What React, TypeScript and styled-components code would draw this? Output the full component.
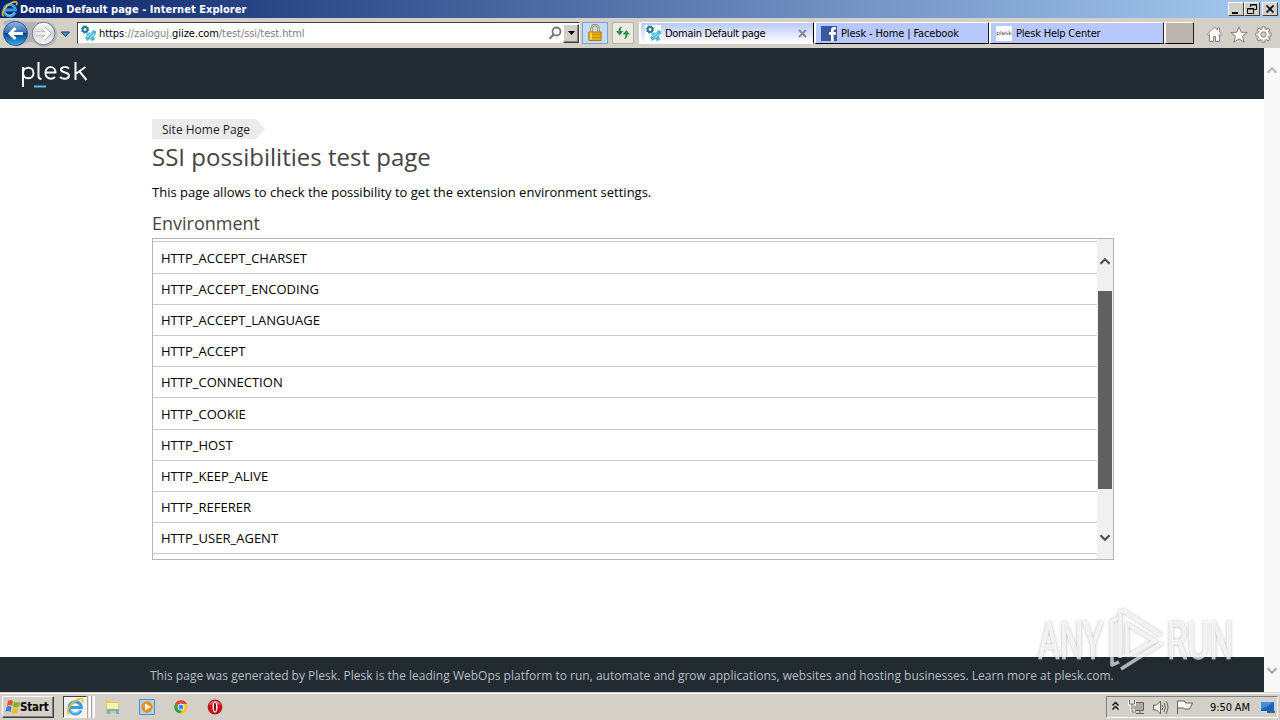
import type { ReactNode } from 'react'
import styled, { createGlobalStyle, css } from 'styled-components'

const GlobalStyle = createGlobalStyle`
  * {
    box-sizing: border-box;
  }

  body {
    margin: 0;
    overflow: hidden;
    background: #fff;
    font-family: 'Open Sans', sans-serif;
  }

  svg {
    display: block;
    flex-shrink: 0;
  }
`

const Screen = styled.div`
  position: relative;
  display: flex;
  flex-direction: column;
  width: 1280px;
  height: 720px;
  overflow: hidden;
`

/* Title bar */

const TitleBar = styled.div`
  display: flex;
  align-items: center;
  height: 18px;
  padding: 0 2px 0 1px;
  background: linear-gradient(90deg, #0a246a 0%, #a6caf0 100%);
`

const WindowTitle = styled.div`
  flex: 1;
  margin-left: 2px;
  padding-top: 2px;
  font: bold 11px/16px 'DejaVu Sans Condensed', 'DejaVu Sans', sans-serif;
  letter-spacing: 0.04px;
  white-space: nowrap;
  color: #fff;
`

const WindowButton = styled.div<{ $gap?: boolean }>`
  width: 16px;
  height: 14px;
  margin-left: ${({ $gap }) => ($gap ? '2px' : '0')};
  background: #d4d0c8;
  border: 1px solid;
  border-color: #fff #404040 #404040 #fff;
`

/* Toolbar */

const Toolbar = styled.div`
  display: flex;
  height: 30px;
  padding-top: 4px;
  background: #d4d0c8;
`

const NavButtons = styled.div`
  width: 77px;
  margin-top: -3px;
`

const AddressBar = styled.div`
  display: flex;
  align-items: center;
  width: 503px;
  height: 22px;
  padding: 0 0 0 2px;
  background: #fff;
  border: 1px solid;
  border-color: #404040 #fff #d4d0c8 #404040;
`

const Url = styled.div`
  flex: 1;
  margin-left: 3px;
  padding-top: 2px;
  font: 11px/18px 'DejaVu Sans Condensed', 'DejaVu Sans', sans-serif;
  letter-spacing: -0.06px;
  white-space: nowrap;
  color: #808080;

  b {
    font-weight: 400;
    color: #000;
  }
`

const DropButton = styled.div`
  display: flex;
  align-items: center;
  justify-content: center;
  width: 16px;
  height: 19px;
  background: #d4d0c8;
  border: 1px solid;
  border-color: #fff #404040 #404040 #fff;
  box-shadow: inset -1px -1px #808080;
`

const ToolButton = styled.div<{ $active?: boolean }>`
  display: flex;
  align-items: center;
  justify-content: center;
  width: ${({ $active }) => ($active ? '26px' : '22px')};
  height: 22px;
  margin-left: ${({ $active }) => ($active ? '2px' : '4px')};
  background: #ece9e5;
  border: 1px solid #b5b2ac;
  border-radius: 2px;

  ${({ $active }) =>
    $active &&
    css`
      background: #c4dcf8;
      border-color: #7da2ce;
      border-radius: 0;
    `}
`

const Tabs = styled.div`
  display: flex;
  margin-left: 5px;
`

const TabItem = styled.div<{ $active?: boolean }>`
  display: flex;
  align-items: center;
  width: 175px;
  height: 22px;
  padding: 0 5px;
  background: #b8c8fc;
  border: 1px solid;
  border-color: #fff #202020 #000 #fff;
  border-left-width: 2px;

  ${({ $active }) =>
    $active &&
    css`
      padding: 0 6px 0 4px;
      background: linear-gradient(#b9c9f6, #fff);
      border-color: #fff #000 #fff #fff;
    `}
`

const TabLabel = styled.span<{ $spacing: number }>`
  flex: 1;
  margin-left: 4px;
  padding-top: 2px;
  font: 11px/18px 'DejaVu Sans Condensed', 'DejaVu Sans', sans-serif;
  letter-spacing: ${({ $spacing }) => $spacing}px;
  white-space: nowrap;
  color: #000;
`

const NewTab = styled.div`
  width: 30px;
  height: 22px;
  background: #bdb5ad;
  border: 1px solid;
  border-color: #fff #202020 #000 #fff;
  border-left-width: 2px;
`

const PleskBadge = styled.div`
  width: 16px;
  height: 15px;
  background: #fff;
  font: 6px/13px 'DejaVu Sans', sans-serif;
  letter-spacing: -0.1px;
  text-align: center;
  color: #444;
`

const Commands = styled.div`
  display: flex;
  gap: 7px;
  margin: 4px 0 0 12px;
`

/* Web page */

const Viewport = styled.div`
  display: flex;
  height: 644px;
`

const Page = styled.div`
  display: flex;
  flex-direction: column;
  width: 1264px;
  background: #fff;
`

const Header = styled.header`
  height: 51px;
  padding: 9px 0 0 20px;
  background: #222b32;
`

const Content = styled.main`
  flex: 1;
  width: 962px;
  margin-left: 152px;
  padding-top: 20px;
`

const Crumb = styled.div`
  width: 113px;
  height: 20px;
  padding-left: 10px;
  background: #ebebeb;
  clip-path: polygon(0 0, 104px 0, 100% 50%, 104px 100%, 0 100%);
  font-size: 12px;
  line-height: 21px;
  white-space: nowrap;
  color: #222;
`

const Title = styled.h1`
  margin: 0;
  font-weight: 400;
  font-size: 24px;
  line-height: 36px;
  white-space: nowrap;
  color: #444;
`

const Text = styled.p`
  margin: 5px 0 0;
  font-size: 13px;
  line-height: 24px;
  white-space: nowrap;
  color: #000;
`

const Subtitle = styled.h2`
  margin: 7px 0 0;
  font-weight: 400;
  font-size: 18px;
  line-height: 25px;
  color: #444;
`

const ListBox = styled.div`
  display: flex;
  height: 322px;
  margin-top: 2px;
  border: 1px solid #b5b5b5;
  overflow: hidden;
`

const Rows = styled.div`
  flex: 1;
  padding-top: 2.45px;
`

const Row = styled.div`
  height: 31.15px;
  padding: 0.17px 0 0 8px;
  border-top: 1px solid #ccc;
  font-size: 13px;
  letter-spacing: 0.02px;
  line-height: 31px;
  color: #000;

  &:first-child {
    height: 31.4px;
  }
`

const ListScroll = styled.div`
  display: flex;
  flex-direction: column;
  align-items: center;
  width: 16px;
  padding-top: 17px;
  background: #f0f0f0;
`

const Thumb = styled.div`
  width: 14px;
  height: 198px;
  margin: 25px 0 44px;
  background: #606060;
`

const PageScroll = styled.div`
  display: flex;
  flex-direction: column;
  justify-content: space-between;
  align-items: center;
  width: 16px;
  padding: 17px 0 16px;
  background: #f8f8f8;
`

const Footer = styled.footer`
  height: 35px;
  padding-left: 150px;
  background: #222b32;
  font-size: 12px;
  letter-spacing: 0.008px;
  line-height: 38px;
  white-space: nowrap;
  color: #b6bdc2;
`

/* Taskbar */

const Taskbar = styled.div`
  display: flex;
  align-items: flex-start;
  height: 28px;
  padding: 4px 2px 0;
  background: #d4d0c8;
  box-shadow: inset 0 1px #d4d0c8, inset 0 2px #fff;
`

const StartButton = styled.div`
  display: flex;
  align-items: center;
  width: 52px;
  height: 22px;
  padding-left: 1px;
  border: 1px solid;
  border-color: #fff #404040 #404040 #fff;
  box-shadow: inset -1px -1px #808080;
  font: bold 11.5px/22px 'DejaVu Sans Condensed', 'DejaVu Sans', sans-serif;
  letter-spacing: -0.2px;
  color: #000;
`

const ActiveTask = styled.div`
  display: flex;
  align-items: center;
  width: 24px;
  height: 22px;
  margin-left: 9px;
  padding-left: 2px;
  background: #f3f1ed;
  border: 1px solid;
  border-color: #404040 #fff #fff #404040;
`

const TaskEdge = styled.div`
  width: 4px;
  height: 22px;
  background: #e9e6e0;
  border-right: 2px solid #fff;
  border-left: 1px solid #a7a39c;
`

const Launchers = styled.div`
  display: flex;
  flex: 1;
  gap: 18px;
  margin: 3px 0 0 10px;
`

const Tray = styled.div`
  display: flex;
  align-items: center;
  width: 172px;
  height: 22px;
  border: 1px solid;
  border-color: #808080 #fff #fff #808080;
`

const Clock = styled.span`
  flex: 1;
  margin-left: 11px;
  padding-top: 2px;
  font: 11px/18px 'DejaVu Sans Condensed', 'DejaVu Sans', sans-serif;
  letter-spacing: -0.1px;
  white-space: nowrap;
  color: #000;
`

const Watermark = styled.svg`
  position: absolute;
  top: 605px;
  left: 1030px;
  overflow: visible;
`

const IeIcon = ({ size = 16 }: { size?: number }) => (
  <svg width={size} height={size} viewBox="0 0 16 16" fill="none">
    <path
      d="M13.2 10.8A5.4 5.4 0 1 1 13.6 8.5H4"
      stroke="#3a9be2"
      strokeWidth="2.7"
    />
    <path
      d="M12.5 10.5A4.8 4.8 0 0 1 4 11"
      stroke="#7ed6fa"
      strokeWidth="1"
    />
    <path
      d="M2.5 14.5C-1 12 5 3.5 11 1.2c4-1.5 4.5.5 3.4 2.7"
      stroke="#edbd2d"
      strokeWidth="1.5"
    />
  </svg>
)

const GearsIcon = () => (
  <svg width="16" height="16" viewBox="0 0 16 16">
    <path fill="#fff" d="M0 0h16v16H0z" />
    <circle
      cx="5"
      cy="4.5"
      r="2.4"
      fill="none"
      stroke="#237b8d"
      strokeWidth="2"
    />
    <circle
      cx="5"
      cy="4.5"
      r="3.8"
      fill="none"
      stroke="#237b8d"
      strokeDasharray="1.5 1.5"
    />
    <path
      fill="#50b8dc"
      d="M9 7l2 1 2-3 3 1v3l-2 1 1 5-3 1-2-2-3 2-2-4 2-1-1-2 3-1z"
    />
    <path stroke="#c9edf8" d="M7 12l5-4M10 13l4-4" />
  </svg>
)

const Chevron = ({ up, color }: { up?: boolean; color: string }) => (
  <svg width="12" height="10" viewBox="0 0 12 10">
    <path
      d={up ? 'M1.5 7.7L6 3.2l4.5 4.5' : 'M1.5 2.3L6 6.8l4.5-4.5'}
      fill="none"
      stroke={color}
      strokeWidth="2.2"
    />
  </svg>
)

const Navigation = () => (
  <svg width="77" height="29" viewBox="0 0 77 29">
    <defs>
      <linearGradient id="back" x2="0" y2="1">
        <stop stopColor="#93b9e5" />
        <stop offset=".48" stopColor="#2e68b5" />
        <stop offset=".5" stopColor="#07448f" />
        <stop offset="1" stopColor="#3bb1ef" />
      </linearGradient>
      <linearGradient id="forward" x2="0" y2="1">
        <stop stopColor="#fff" />
        <stop offset=".5" stopColor="#d5d7da" />
        <stop offset="1" stopColor="#f8f8f8" />
      </linearGradient>
    </defs>
    <path
      d="M3 3C12-1 19 2 27 3h21c6 1 9 7 9 13 0 7-6 12-13 12-6 0-8-5-14-5-5 0-8 5-15 5"
      fill="#b3b4b8"
    />
    <circle
      cx="15.5"
      cy="14.5"
      r="12"
      fill="url(#back)"
      stroke="#395b8c"
    />
    <circle
      cx="43.5"
      cy="14.5"
      r="11.3"
      fill="url(#forward)"
      stroke="#777b83"
    />
    <path
      d="M23 14.5H10m5.5-5.5L10 14.5l5.5 5.5"
      fill="none"
      stroke="#fff"
      strokeWidth="3"
    />
    <path
      d="M36 14.5h13M43.5 9l5.5 5.5-5.5 5.5"
      fill="none"
      stroke="#aaa"
      strokeWidth="4"
    />
    <path
      d="M36 14.5h13M43.5 9l5.5 5.5-5.5 5.5"
      fill="none"
      stroke="#fff"
      strokeWidth="2.5"
    />
    <path d="M61.5 13h8L65.5 17.5z" fill="#4b9ad0" stroke="#193a60" />
  </svg>
)

const HomeIcon = () => (
  <svg
    width="17"
    height="17"
    viewBox="0 0 17 17"
    fill="#fff"
    stroke="#85817c"
    strokeLinejoin="round"
  >
    <path d="M11.5 4V2h2v4l2.5 2.5-1 1-1.5-1v7h-4v-5h-2v5h-4v-7l-1.5 1-1-1L8.5 1z" />
  </svg>
)

const StarIcon = () => (
  <svg width="18" height="17" viewBox="0 0 18 17">
    <path
      d="M9 .8l2.2 5.5 6 .2-4.7 3.8 1.6 5.8L9 12.8l-5.1 3.3 1.6-5.8L.8 6.5l6-.2z"
      fill="#fff"
      stroke="#85817c"
    />
  </svg>
)

const GearIcon = () => (
  <svg width="17" height="17" viewBox="0 0 17 17">
    {[0, 45, 90, 135].map((angle) => (
      <path
        key={angle}
        d="M7 .8h3v15.4H7z"
        fill="#fff"
        stroke="#85817c"
        transform={`rotate(${angle} 8.5 8.5)`}
      />
    ))}
    <circle cx="8.5" cy="8.5" r="5.2" fill="#fff" />
    <circle cx="8.5" cy="8.5" r="2.7" fill="#d4d0c8" stroke="#85817c" />
  </svg>
)

type TabProps = {
  icon: ReactNode
  label: string
  active?: boolean
  spacing?: number
}

const Tab = ({ icon, label, active, spacing = 0 }: TabProps) => (
  <TabItem $active={active}>
    {icon}
    <TabLabel $spacing={spacing}>{label}</TabLabel>
    {active && (
      <svg width="9" height="9" viewBox="0 0 9 9">
        <path d="M1 1l7 7M8 1L1 8" stroke="#858998" strokeWidth="2" />
      </svg>
    )}
  </TabItem>
)

const variables = [
  'HTTP_ACCEPT_CHARSET',
  'HTTP_ACCEPT_ENCODING',
  'HTTP_ACCEPT_LANGUAGE',
  'HTTP_ACCEPT',
  'HTTP_CONNECTION',
  'HTTP_COOKIE',
  'HTTP_HOST',
  'HTTP_KEEP_ALIVE',
  'HTTP_REFERER',
  'HTTP_USER_AGENT'
]

const App = () => {
  return (
    <Screen>
      <GlobalStyle />
      <TitleBar>
        <IeIcon size={17} />
        <WindowTitle>Domain Default page - Internet Explorer</WindowTitle>
        <WindowButton>
          <svg width="14" height="12">
            <path d="M3 9h6v2H3z" />
          </svg>
        </WindowButton>
        <WindowButton>
          <svg width="14" height="12" fill="none" stroke="#000">
            <path d="M5.5 4V1.5h6v5H9M5 2h7M2.5 5.5h6v5h-6zM2 6h7" />
          </svg>
        </WindowButton>
        <WindowButton $gap>
          <svg width="14" height="12">
            <path
              d="M3.5 2.5l7 7m0-7l-7 7"
              stroke="#000"
              strokeWidth="1.7"
            />
          </svg>
        </WindowButton>
      </TitleBar>

      <Toolbar>
        <NavButtons>
          <Navigation />
        </NavButtons>
        <AddressBar>
          <GearsIcon />
          <Url>
            <b>https</b>://zaloguj.<b>giize.com</b>/test/ssi/test.html
          </Url>
          <svg width="16" height="16" viewBox="0 0 16 16">
            <circle
              cx="9.5"
              cy="6.5"
              r="4"
              fill="none"
              stroke="#777"
              strokeWidth="1.8"
            />
            <path d="M6.7 9.5l-4.2 4.2" stroke="#777" strokeWidth="2.2" />
          </svg>
          <DropButton>
            <svg width="7" height="4">
              <path d="M0 0h7L3.5 4z" />
            </svg>
          </DropButton>
        </AddressBar>
        <ToolButton $active>
          <svg width="14" height="18" viewBox="0 0 14 18">
            <path
              d="M3.5 9V4.5a3.5 3.5 0 0 1 7 0V9"
              fill="none"
              stroke="#9a8350"
              strokeWidth="2.4"
            />
            <path
              d="M3.5 9V4.5a3.5 3.5 0 0 1 7 0V9"
              fill="none"
              stroke="#eee0ae"
              strokeWidth=".8"
            />
            <path
              d="M.8 8h12.4v8.5H.8z"
              fill="#e7ae19"
              stroke="#b37a08"
            />
            <path d="M1.5 10.5h11M1.5 13.5h11" stroke="#c68c0a" />
            <path d="M3 8.5v7" stroke="#ffe477" strokeWidth="1.5" />
          </svg>
        </ToolButton>
        <ToolButton>
          <svg width="16" height="16" viewBox="0 0 16 16" fill="#2f9148">
            <path d="M7 1.5C4.5 2 3.5 3.5 3.5 6H1l3.7 4.5L8.3 6H5.7C5.7 4.5 6 3 7 1.5z" />
            <path d="M9 14c2.5-.5 3.5-2 3.5-4.5H15L11.3 5 7.7 9.5h2.6C10.3 11 10 12.5 9 14z" />
          </svg>
        </ToolButton>
        <Tabs>
          <Tab
            icon={<GearsIcon />}
            label="Domain Default page"
            spacing={-0.28}
            active
          />
          <Tab
            icon={
              <svg width="16" height="15" viewBox="0 0 16 15">
                <path d="M0 0h16v15H0z" fill="#3858a2" />
                <path
                  d="M10 15V9H8V6h2V4q0-3 3-3h2v2.5h-1.5q-.8 0-.8.8V6H15l-.4 3h-1.9v6z"
                  fill="#fff"
                />
              </svg>
            }
            label="Plesk - Home | Facebook"
            spacing={-0.13}
          />
          <Tab
            icon={<PleskBadge>plesk</PleskBadge>}
            label="Plesk Help Center"
            spacing={-0.2}
          />
          <NewTab />
        </Tabs>
        <Commands>
          <HomeIcon />
          <StarIcon />
          <GearIcon />
        </Commands>
      </Toolbar>

      <Viewport>
        <Page>
          <Header>
            <svg
              width="70"
              height="32"
              viewBox="0 0 70 32"
              fill="none"
              stroke="#f5f7f8"
              strokeWidth="2"
            >
              <path d="M3 30V10M3 16c0-7 10.5-7 10.5 0S3 23 3 16M18.5 5v14q0 3 3 3" />
              <path d="M25.5 15.5h10c0-7-10-7.5-10 .2 0 6 6 7.5 9.5 4.3" />
              <path d="M49 11.5c-2-2-8-2-8 1 0 4 8 2 8 6 0 4-6 4-9 1.5M55.5 5v18M65.5 10l-10 7M59.5 14.5L66.5 23" />
              <path d="M14 29.5h12" stroke="#53bce6" />
            </svg>
          </Header>
          <Content>
            <Crumb>Site Home Page</Crumb>
            <Title>SSI possibilities test page</Title>
            <Text>
              This page allows to check the possibility to get the extension
              environment settings.
            </Text>
            <Subtitle>Environment</Subtitle>
            <ListBox>
              <Rows>
                {variables.map((name) => (
                  <Row key={name}>{name}</Row>
                ))}
                <Row />
              </Rows>
              <ListScroll>
                <Chevron up color="#505050" />
                <Thumb />
                <Chevron color="#505050" />
              </ListScroll>
            </ListBox>
          </Content>
          <Footer>
            This page was generated by Plesk. Plesk is the leading WebOps
            platform to run, automate and grow applications, websites and
            hosting businesses. Learn more at plesk.com.
          </Footer>
        </Page>
        <PageScroll>
          <Chevron up color="#bbb" />
          <Chevron color="#aaa" />
        </PageScroll>
      </Viewport>

      <Taskbar>
        <StartButton>
          <svg width="16" height="16" viewBox="0 0 16 16">
            <path d="M4 2q3-2 5 0L8 7q-2-2-5 0z" fill="#ed5425" />
            <path d="M10 2.5q3 2 6 0l-1 5q-3 2-6 0z" fill="#79b62c" />
            <path d="M2.5 8q3-2 5 0l-1 5q-3-2-5 0z" fill="#3580d4" />
            <path d="M8.5 8.5q3 2 6 0l-1 5q-3 2-6 0z" fill="#f5bd22" />
          </svg>
          Start
        </StartButton>
        <ActiveTask>
          <IeIcon size={18} />
        </ActiveTask>
        <TaskEdge />
        <TaskEdge />
        <Launchers>
          <svg width="16" height="16" viewBox="0 0 16 16">
            <path d="M1 2h5l1 1h7v11H1z" fill="#e9c55d" />
            <path d="M2 4h11v7H2z" fill="#fff1a5" />
            <path d="M2 15v-5h12v5h-3v-3H5v3z" fill="#63b5dd" />
          </svg>
          <svg width="16" height="16" viewBox="0 0 16 16">
            <path
              d="M.5.5h15v15H.5z"
              fill="#a9d3ef"
              stroke="#4c91c8"
            />
            <circle cx="8" cy="8" r="5.7" fill="#f48a18" />
            <path d="M6 4.5v7L12 8z" fill="#fff" />
          </svg>
          <svg width="16" height="16" viewBox="0 0 16 16">
            <circle cx="8" cy="8" r="6.7" fill="#f8c52f" />
            <path
              d="M8 8L2.2 4.5A6.7 6.7 0 0 1 14 5H8z"
              fill="#df4538"
            />
            <path d="M8 8L2.2 4.5A6.7 6.7 0 0 0 7 14.6L10 10z" fill="#31a052" />
            <circle
              cx="8"
              cy="8"
              r="3"
              fill="#4287df"
              stroke="#fff"
            />
          </svg>
          <svg width="16" height="16" viewBox="0 0 16 16">
            <circle cx="8" cy="8" r="7.4" fill="#c3141d" />
            <path d="M2 5.5Q8-2 14 5.5z" fill="#e8686a" />
            <ellipse cx="8" cy="8" rx="2.5" ry="5.5" fill="#fff" />
            <ellipse cx="8" cy="8" rx="1.1" ry="4.5" fill="#831017" />
          </svg>
        </Launchers>
        <Tray>
          <svg
            width="92"
            height="20"
            viewBox="0 0 92 20"
            fill="none"
            stroke="#66635f"
          >
            <path
              d="M5.5 8.5l3-3 3 3M5.5 12.5l3-3 3 3"
              stroke="#000"
              strokeWidth="1.3"
            />
            <path
              d="M26.5 5.5h10v8h-10zM29 16.5h8M33 14v2"
              fill="#aaa"
            />
            <path
              d="M22.5 3v4h5V3M25 7v7h3"
              stroke="#fff"
              strokeWidth="3"
            />
            <path d="M22.5 3v4h5V3M25 7v8h4" />
            <path
              d="M46.5 8h3l4-4v13l-4-4h-3z"
              fill="#eee"
              strokeLinejoin="round"
            />
            <path d="M55 8q2 2 0 5M57 6q3 4 0 9M59 4q4 6 0 13" />
            <path
              d="M70.5 17V4h7l1 2h7l-3 6h-5l-1-1h-6"
              fill="#f8f8f8"
            />
          </svg>
          <Clock>9:50 AM</Clock>
          <svg width="18" height="16" viewBox="0 0 18 16">
            <path
              d="M1.5 2.5h14v10h-14z"
              fill="#1764bc"
              stroke="#c5d9ed"
            />
            <path d="M2 3h13L7 8 2 10z" fill="#458dd8" />
            <path d="M8 13h8" stroke="#36648e" strokeWidth="2" />
          </svg>
        </Tray>
      </Taskbar>

      <Watermark width="210" height="76" viewBox="0 0 210 76">
        <defs>
          <filter id="soft" x="-10%" y="-20%" width="120%" height="140%">
            <feDropShadow
              dx="0"
              dy="0"
              stdDeviation="1.6"
              floodColor="#333"
              floodOpacity=".65"
            />
          </filter>
        </defs>
        <g
          filter="url(#soft)"
          fill="#fff"
          fillOpacity=".62"
          fontFamily="Roboto, sans-serif"
          fontSize="51"
        >
          <text
            x="8"
            y="54"
            textLength="65"
            lengthAdjust="spacingAndGlyphs"
            stroke="#fff"
            strokeOpacity=".35"
          >
            ANY
          </text>
          <text
            x="137"
            y="54"
            textLength="66"
            lengthAdjust="spacingAndGlyphs"
            stroke="#fff"
            strokeOpacity=".35"
          >
            RUN
          </text>
          <g
            fill="none"
            stroke="#fff"
            strokeOpacity=".6"
            strokeWidth="3.5"
            strokeLinejoin="round"
          >
            <path d="M88 13l-6 3v44l7-3" />
            <path d="M90 53V7l4-1 37 24" />
            <path d="M97 51V19l28 17-28 15M91 64l41-26" />
          </g>
        </g>
      </Watermark>
    </Screen>
  )
}

export default App
